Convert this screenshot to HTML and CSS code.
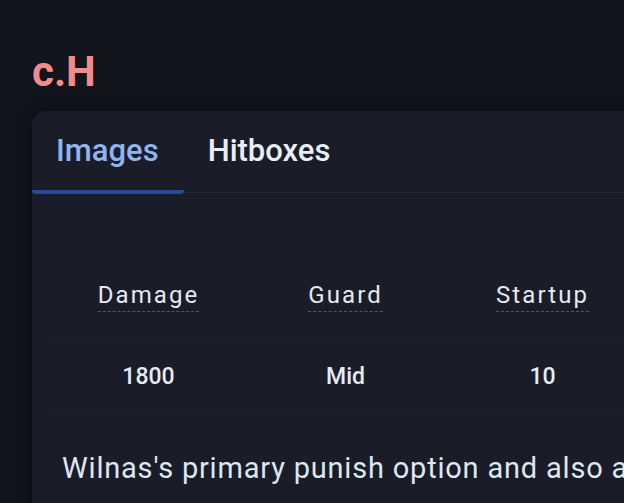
FILE: index.html
```html
<!DOCTYPE html>
<html lang="en">
<head>
<meta charset="utf-8">
<title>c.H</title>
<link rel="stylesheet" href="styles.css">
</head>
<body>
<main class="page">
  <h1 class="move-title">c.H</h1>
  <section class="card">
    <nav class="tabs">
      <div class="tab tab-active">Images</div>
      <div class="tab">Hitboxes</div>
    </nav>
    <div class="card-body">
      <div class="stats">
        <div class="stat-head"><span class="hint">Damage</span></div>
        <div class="stat-head"><span class="hint">Guard</span></div>
        <div class="stat-head"><span class="hint">Startup</span></div>
        <div class="stat-head"><span class="hint">Active</span></div>
        <div class="stat-head"><span class="hint">Recovery</span></div>
        <div class="stat-val">1800</div>
        <div class="stat-val">Mid</div>
        <div class="stat-val">10</div>
        <div class="stat-val">3</div>
        <div class="stat-val">24</div>
      </div>
      <p class="desc">Wilnas's primary punish option and also a solid anti-air.</p>
    </div>
  </section>
</main>
</body>
</html>
```
FILE: styles.css
```css
html, body {
  margin: 0;
  padding: 0;
  background: #11141b;
  overflow: hidden;
}
body {
  font-family: Roboto, "Liberation Sans", Arial, sans-serif;
  color: #e3e9f3;
}
.page {
  padding: 47px 0 0 32px;
  width: 1100px;
}
.move-title {
  margin: 0 0 14px 0;
  font-size: 42px;
  line-height: 50px;
  font-weight: 700;
  color: #f28b8b;
}
.card {
  background: #1a1d27;
  border-radius: 14px;
  box-shadow: 0 0 18px rgba(0, 0, 0, 0.35);
  width: 1000px;
  overflow: hidden;
}
.tabs {
  display: flex;
  height: 82px;
  border-bottom: 1px solid #212532;
  box-sizing: border-box;
}
.tab {
  display: flex;
  align-items: center;
  padding: 0 25px 4px 24px;
  font-size: 31px;
  font-weight: 500;
  color: #e8eef8;
  box-sizing: border-box;
  height: 83px;
}
.tab-active {
  color: #8fb4f0;
  border-bottom: 4px solid #27499a;
  border-radius: 0 0 4px 4px;
  padding-bottom: 0;
}
.card-body {
  padding: 60px 30px 80px 18px;
}
.stats {
  display: grid;
  grid-template-columns: repeat(5, 197px);
}
.stat-head {
  padding: 28px 0;
  text-align: center;
  border-bottom: 1px solid #1d2130;
  font-size: 24px;
  line-height: 28px;
  letter-spacing: 2.1px;
}
.hint {
  display: inline-block;
  border-bottom: 1px dashed #4b5676;
  padding-bottom: 2px;
  line-height: 28px;
}
.stat-val {
  padding: 22px 0;
  text-align: center;
  font-size: 23px;
  line-height: 28px;
  font-weight: 500;
  color: #e6ebf3;
  border-bottom: 1px solid #1c1f2c;
}
.desc {
  margin: 34px 0 0 12px;
  font-size: 29px;
  line-height: 40px;
  letter-spacing: 0.8px;
  color: #dde6f4;
  white-space: nowrap;
}
```
